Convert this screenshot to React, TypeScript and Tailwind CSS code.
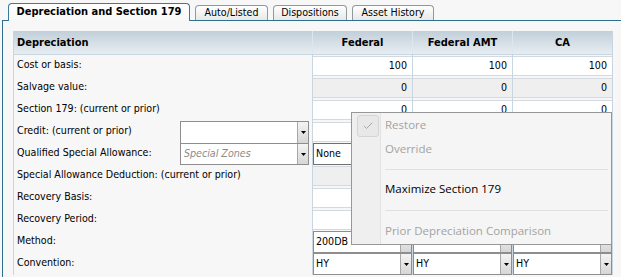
import { Check } from "lucide-react";

const labels = [
  "Cost or basis:",
  "Salvage value:",
  "Section 179: (current or prior)",
  "Credit: (current or prior)",
  "Qualified Special Allowance:",
  "Special Allowance Deduction: (current or prior)",
  "Recovery Basis:",
  "Recovery Period:",
  "Method:",
  "Convention:",
];

const Arrow = () => (
  <div className="w-[11px] h-full shrink-0 flex items-center justify-center bg-gradient-to-b from-[#f4f4f4] to-[#d6d6d6] border-l border-[#a8a8a8]">
    <svg width="5" height="3" viewBox="0 0 5 3">
      <path d="M0 0h5L2.5 3z" fill="#000" />
    </svg>
  </div>
);

const Combo = ({ text, italic }: { text?: string; italic?: boolean }) => (
  <div className="flex h-full w-full bg-white border border-[#8e8e8e]">
    <div className={`flex-1 flex items-center pl-[2px] text-[10.6px] ${italic ? "italic text-[#8a8a8a] pl-[3px]" : "text-black"}`}>{text}</div>
    <Arrow />
  </div>
);

const Cell = ({ kind, value }: { kind: string; value?: string }) => {
  if (kind === "combo") {
    return (
      <div className="w-[100px] h-full border-l border-[#c8d6e2]">
        <Combo text={value} />
      </div>
    );
  }
  if (kind === "none") {
    return (
      <div className="w-[100px] h-full border-l border-[#c8d6e2]">
        <div className="h-full w-full bg-white border border-[#6f6f6f] flex items-center pl-[2px] text-[10.6px]">{value}</div>
      </div>
    );
  }
  return (
    <div className="w-[100px] h-full border-l border-[#c8d6e2] py-[1px]">
      <div className={`h-full w-full border-y border-[#d3d9de] flex items-center justify-end pr-[5px] text-[10.6px] ${kind === "gray" ? "bg-[#efefef]" : "bg-white"}`}>
        {value}
      </div>
    </div>
  );
};

const rows: { kind: string; value?: string }[] = [
  { kind: "white", value: "100" },
  { kind: "gray", value: "0" },
  { kind: "white", value: "0" },
  { kind: "white" },
  { kind: "none", value: "None" },
  { kind: "gray" },
  { kind: "white" },
  { kind: "white" },
  { kind: "combo", value: "200DB" },
  { kind: "combo", value: "HY" },
];

export default function App() {
  return (
    <div className="relative w-[621px] h-[277px] overflow-hidden bg-[#f7f7f7] text-black" style={{ fontFamily: "'DejaVu Sans Condensed', 'DejaVu Sans', sans-serif" }}>
      {/* tabs */}
      <div className="flex items-end h-[20px] pl-[8px] gap-[5px]">
        <div className="relative z-10 h-[18px] w-[182px] -mb-[1px] bg-gradient-to-b from-white to-[#f7f7f7] border border-b-0 border-[#3b7a98] rounded-t-[4px] flex items-center justify-center font-bold text-[11px]">
          Depreciation and Section 179
        </div>
        <div className="h-[15px] w-[73px] bg-gradient-to-b from-white to-[#e8e8e8] border border-b-0 border-[#8f9aa0] rounded-t-[4px] flex items-center justify-center text-[10.6px]">Auto/Listed</div>
        <div className="h-[15px] w-[74px] bg-gradient-to-b from-white to-[#e8e8e8] border border-b-0 border-[#8f9aa0] rounded-t-[4px] flex items-center justify-center text-[10.6px]">Dispositions</div>
        <div className="h-[15px] w-[82px] bg-gradient-to-b from-white to-[#e8e8e8] border border-b-0 border-[#8f9aa0] rounded-t-[4px] flex items-center justify-center text-[10.6px]">Asset History</div>
      </div>

      {/* panel */}
      <div className="ml-[2px] h-[257px] border-l border-t border-[#2f6f8e] pt-[10px] pl-[10px]">
        <div className="w-[600px] border-x border-[#c8d6e2]">
          <div className="flex h-[24px] bg-gradient-to-b from-[#c2cfd9] to-[#e7eef2] border-b border-[#c8d6e2] font-bold text-[11px]">
            <div className="w-[298px] flex items-center pl-[3px] pt-[2px]">Depreciation</div>
            <div className="w-[100px] border-l border-[#dde6ec] flex items-center justify-center pt-[2px]">Federal</div>
            <div className="w-[100px] border-l border-[#dde6ec] flex items-center justify-center pt-[2px]">Federal AMT</div>
            <div className="w-[100px] border-l border-[#dde6ec] flex items-center justify-center pt-[2px]">CA</div>
          </div>
          {labels.map((label, i) => (
            <div key={label} className="flex h-[22px] text-[10.6px]">
              <div className="w-[298px] flex items-center pl-[3px] relative">
                <span className="-mt-[3px]">{label}</span>
                {i === 3 && (
                  <div className="absolute left-[166px] top-0 w-[129px] h-[23px]">
                    <Combo />
                  </div>
                )}
                {i === 4 && (
                  <div className="absolute left-[166px] top-0 w-[129px] h-[22px]">
                    <Combo text="Special Zones" italic />
                  </div>
                )}
              </div>
              <Cell kind={rows[i].kind} value={rows[i].value} />
              <Cell kind={rows[i].kind} value={rows[i].value} />
              <Cell kind={rows[i].kind} value={rows[i].value} />
            </div>
          ))}
        </div>
      </div>

      {/* context menu */}
      <div className="absolute left-[351px] top-[112px] w-[261px] h-[133px] bg-[#f5f5f5] border border-[#979797] flex text-[11.5px]" style={{ fontFamily: "'Open Sans', sans-serif" }}>
        <div className="w-[29px] bg-[#efefef] border-r border-[#e2e2e2] shrink-0">
          <div className="mt-[2px] ml-[5px] w-[22px] h-[22px] rounded-[3px] border border-[#d4d4d4] bg-[#e8e8e8] flex items-center justify-center">
            <Check size={12} strokeWidth={2} color="#a8a8a8" />
          </div>
        </div>
        <div className="flex-1 flex flex-col pl-[4px] pr-[3px]">
          <div className="h-[24px] flex items-center text-[#a3a3a3]">Restore</div>
          <div className="h-[24px] flex items-center text-[#a3a3a3]">Override</div>
          <div className="h-[17px] flex items-center"><div className="h-px w-full bg-[#e0e0e0]" /></div>
          <div className="h-[22px] flex items-center">Maximize Section 179</div>
          <div className="h-[21px] flex items-center"><div className="h-px w-full bg-[#e0e0e0]" /></div>
          <div className="h-[19px] flex items-center text-[#a3a3a3]">Prior Depreciation Comparison</div>
        </div>
      </div>
    </div>
  );
}
